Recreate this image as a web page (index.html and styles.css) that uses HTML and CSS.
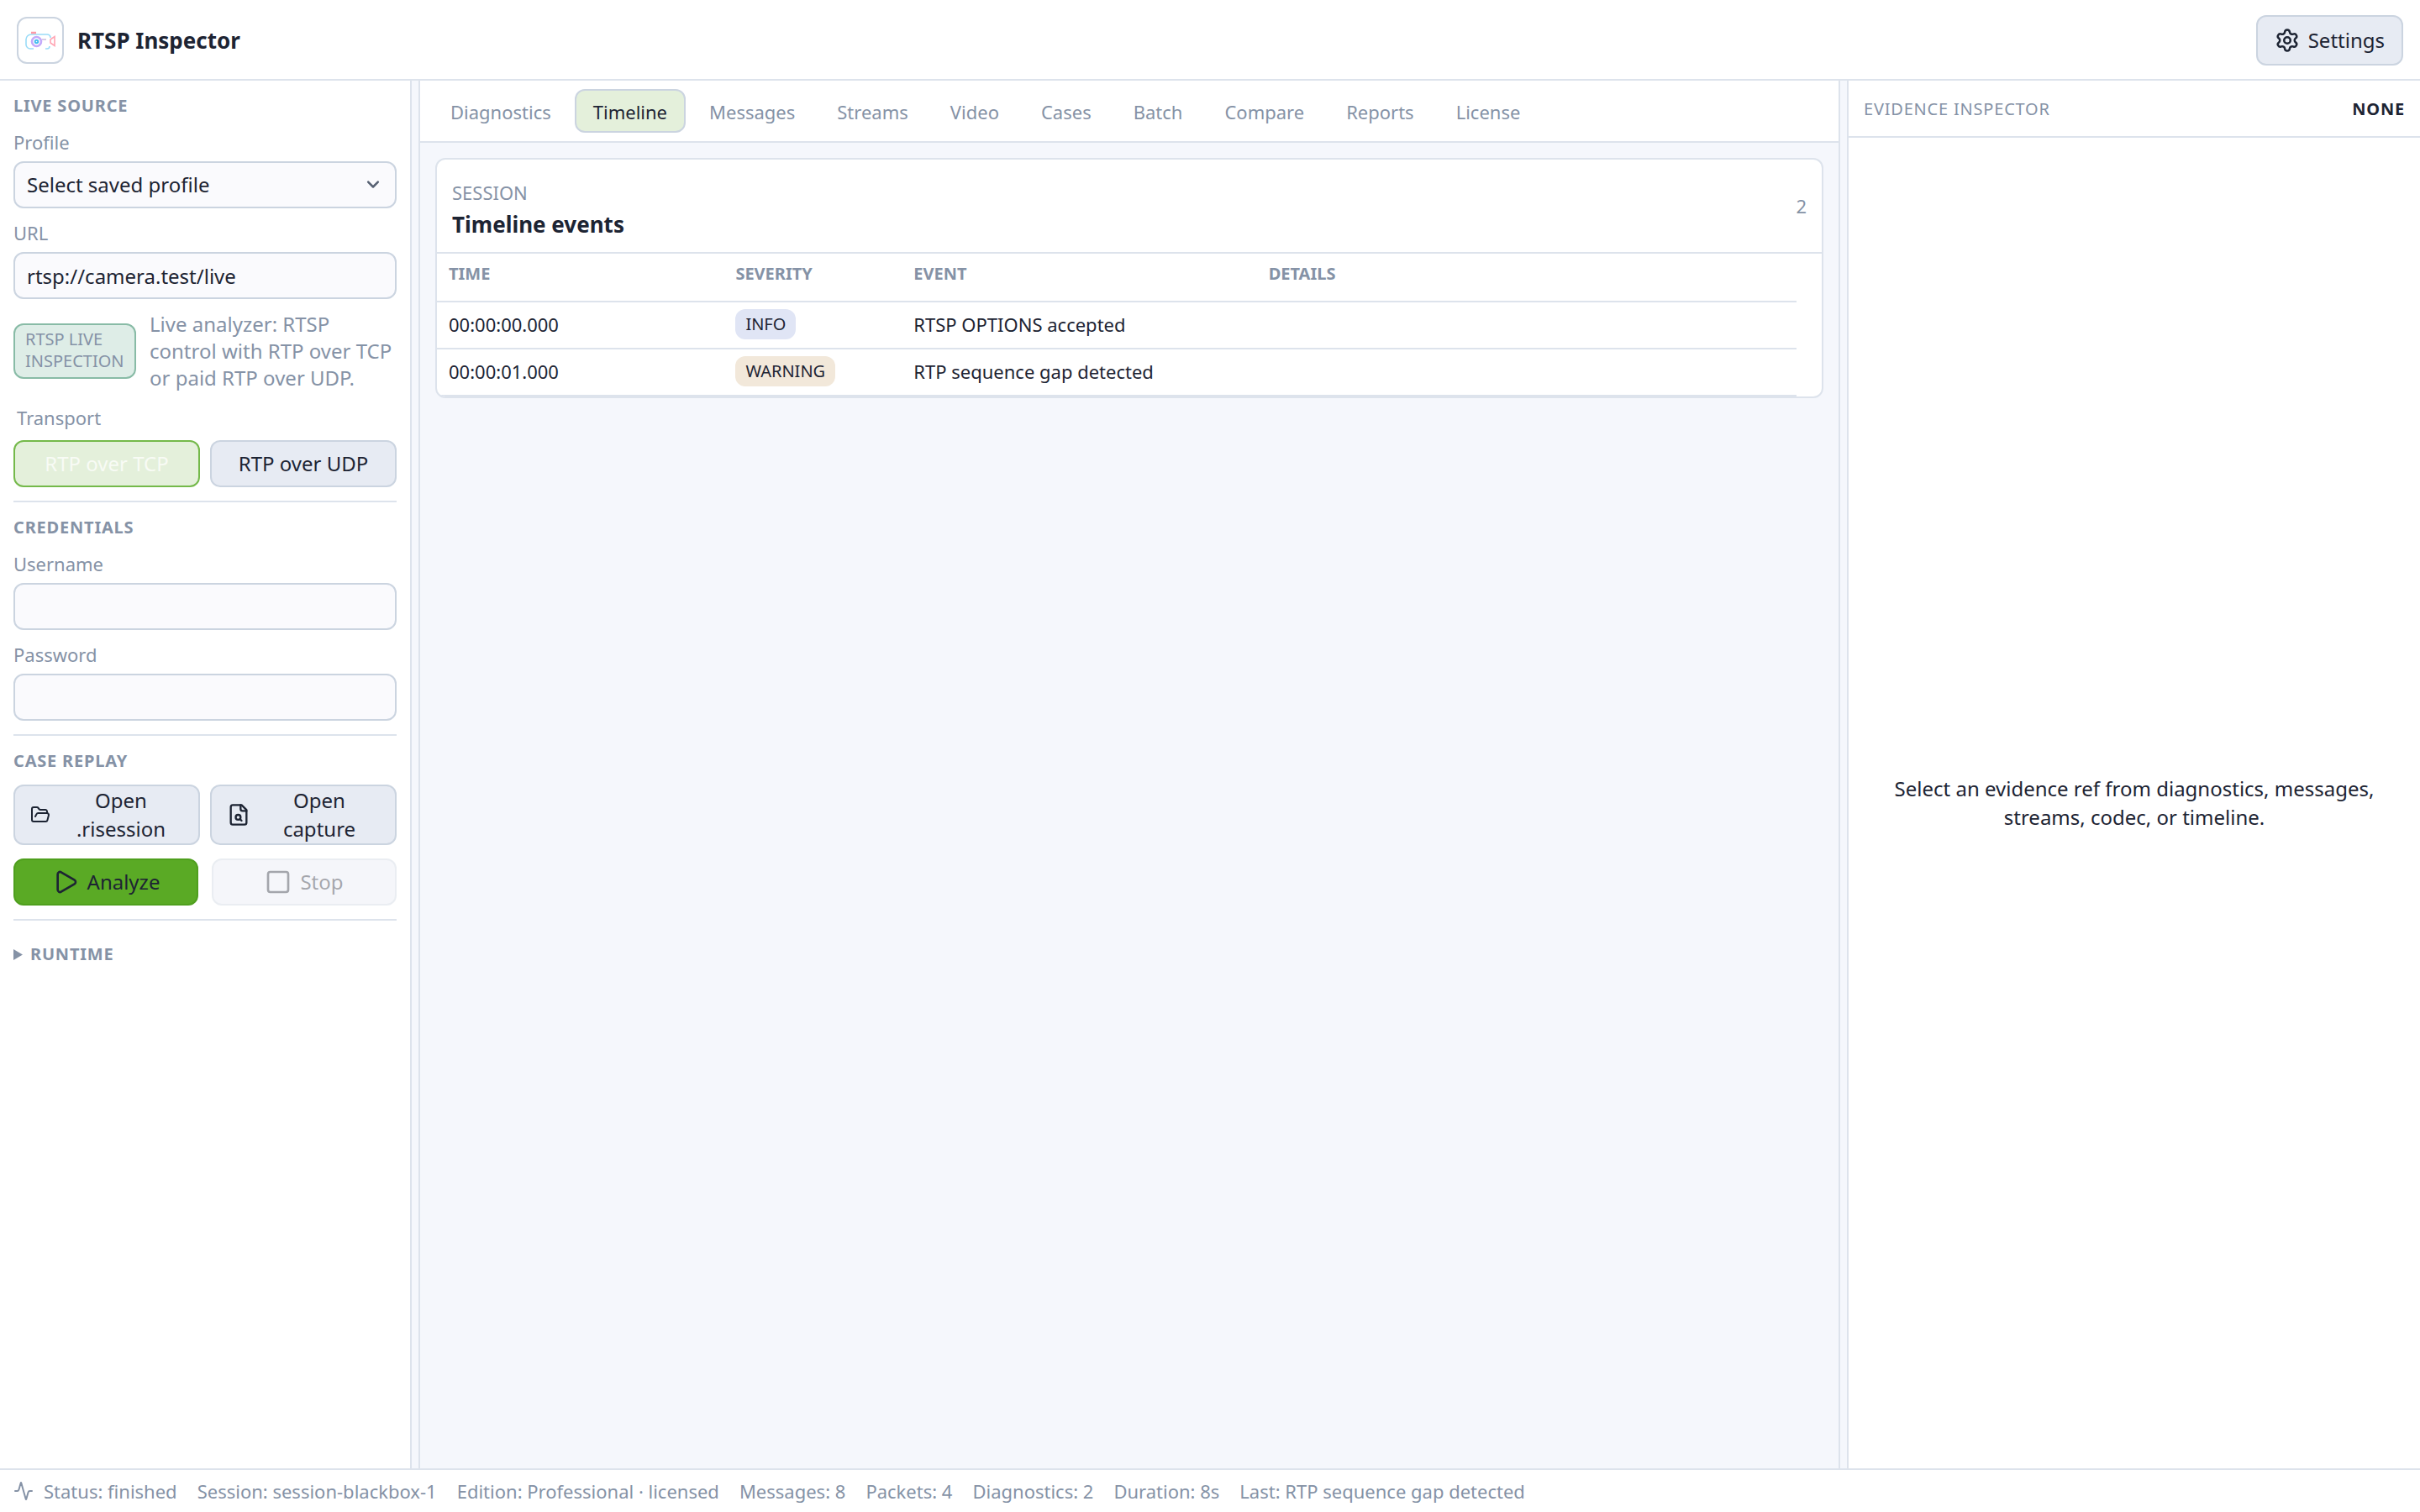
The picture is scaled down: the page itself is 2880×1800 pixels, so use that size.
FILE: index.html
```html
<!DOCTYPE html>
<html lang="en">
<head>
<meta charset="utf-8">
<title>RTSP Inspector</title>
<link rel="stylesheet" href="styles.css">
</head>
<body>
<div class="app">
  <header class="topbar">
    <div class="brand">
      <span class="logo">
        <svg viewBox="0 0 40 40" width="40" height="40" fill="none" stroke-width="1.600">
          <path d="M32 17v-1a4 4 0 0 0-4-3H9a6 6 0 0 0-6 6v6a5 5 0 0 0 5 5h4M26 30h2a3 3 0 0 0 3-3" stroke="#9bdcf8"/>
          <path d="M9 11h6" stroke="#ff9aa6" stroke-width="2.500"/>
          <circle cx="15.500" cy="21.500" r="5.500" stroke="#c3aafa" stroke-width="2.600"/>
          <circle cx="15.500" cy="21.500" r="1.800" stroke="#45bdf0" stroke-width="2"/>
          <path d="M22 19h5" stroke="#cdbfe0"/>
          <path d="M37 15.500v11l-5-3.500v-4z" stroke="#ffa6b4"/>
        </svg>
      </span>
      <h1 class="brand-name">RTSP Inspector</h1>
    </div>
    <button class="btn btn-settings" type="button">
      <svg class="icon icon-md" viewBox="0 0 24 24"><path d="M9.671 4.136a2.34 2.34 0 0 1 4.659 0 2.34 2.34 0 0 0 3.319 1.915 2.34 2.34 0 0 1 2.33 4.033 2.34 2.34 0 0 0 0 3.831 2.34 2.34 0 0 1-2.33 4.033 2.34 2.34 0 0 0-3.319 1.915 2.34 2.34 0 0 1-4.659 0 2.34 2.34 0 0 0-3.32-1.915 2.34 2.34 0 0 1-2.33-4.033 2.34 2.34 0 0 0 0-3.831A2.34 2.34 0 0 1 6.35 6.051a2.34 2.34 0 0 0 3.319-1.915"/><circle cx="12" cy="12" r="3"/></svg>
      Settings
    </button>
  </header>

  <div class="workspace">
    <aside class="sidebar">
      <section class="group">
        <h2 class="group-title">Live source</h2>
        <div class="field">
          <label class="label" for="profile">Profile</label>
          <div class="select-wrap">
            <select class="control" id="profile"><option>Select saved profile</option></select>
            <svg class="icon chevron" viewBox="0 0 24 24"><path d="m5 8 7 7 7-7"/></svg>
          </div>
        </div>
        <div class="field">
          <label class="label" for="url">URL</label>
          <input class="control" id="url" type="text" value="rtsp://camera.test/live">
        </div>
        <div class="notice">
          <span class="mode-badge">RTSP LIVE INSPECTION</span>
          <p class="notice-text">Live analyzer: RTSP control with RTP over TCP or paid RTP over UDP.</p>
        </div>
        <div class="transport" role="group" aria-labelledby="transport-label">
          <span class="label transport-label" id="transport-label">Transport</span>
          <div class="pair">
            <button class="btn btn-selected" type="button" aria-pressed="true">RTP over TCP</button>
            <button class="btn" type="button" aria-pressed="false">RTP over UDP</button>
          </div>
        </div>
      </section>

      <section class="group">
        <h2 class="group-title">Credentials</h2>
        <div class="field">
          <label class="label" for="username">Username</label>
          <input class="control" id="username" type="text">
        </div>
        <div class="field">
          <label class="label" for="password">Password</label>
          <input class="control" id="password" type="password">
        </div>
      </section>

      <section class="group">
        <h2 class="group-title">Case replay</h2>
        <div class="pair replay">
          <button class="btn btn-open" type="button">
            <svg class="icon icon-sm" viewBox="0 0 24 24"><path d="m6 14 1.5-2.9A2 2 0 0 1 9.24 10H20a2 2 0 0 1 1.94 2.5l-1.54 6a2 2 0 0 1-1.95 1.5H4a2 2 0 0 1-2-2V5a2 2 0 0 1 2-2h3.9a2 2 0 0 1 1.69.9l.81 1.2a2 2 0 0 0 1.67.9H18a2 2 0 0 1 2 2v2"/></svg>
            <span class="btn-text">Open .risession</span>
          </button>
          <button class="btn btn-open" type="button">
            <svg class="icon icon-file" viewBox="0 0 24 24"><path d="M15 2H6a2 2 0 0 0-2 2v16a2 2 0 0 0 2 2h12a2 2 0 0 0 2-2V7Z"/><path d="M14 2v4a2 2 0 0 0 2 2h4"/><circle cx="11.500" cy="14.500" r="2.500"/><path d="M13.300 16.300 15 18"/></svg>
            <span class="btn-text">Open capture</span>
          </button>
        </div>
        <div class="pair run">
          <button class="btn btn-primary" type="button">
            <svg class="icon icon-lg" viewBox="0 0 24 24"><path d="M5 5a2 2 0 0 1 3.008-1.728l11.997 6.998a2 2 0 0 1 .003 3.458l-12 7A2 2 0 0 1 5 19z"/></svg>
            Analyze
          </button>
          <button class="btn" type="button" disabled>
            <svg class="icon icon-lg" viewBox="0 0 24 24"><rect x="3" y="3" width="18" height="18" rx="2"/></svg>
            Stop
          </button>
        </div>
      </section>

      <details class="runtime">
        <summary class="group-title runtime-title"><svg class="marker" viewBox="0 0 12 14" width="12" height="14"><path d="M0 1 11 7.500 0 14z" fill="currentColor"/></svg>Runtime</summary>
      </details>
    </aside>

    <div class="resizer" role="separator"></div>

    <main class="main">
      <nav class="tabs">
        <button class="tab" type="button">Diagnostics</button>
        <button class="tab tab-active" type="button">Timeline</button>
        <button class="tab" type="button">Messages</button>
        <button class="tab" type="button">Streams</button>
        <button class="tab" type="button">Video</button>
        <button class="tab" type="button">Cases</button>
        <button class="tab" type="button">Batch</button>
        <button class="tab" type="button">Compare</button>
        <button class="tab" type="button">Reports</button>
        <button class="tab" type="button">License</button>
      </nav>
      <div class="content">
        <section class="card">
          <header class="card-head">
            <div class="card-heading">
              <p class="eyebrow">SESSION</p>
              <h2 class="card-title">Timeline events</h2>
            </div>
            <span class="count">2</span>
          </header>
          <div class="table-wrap">
            <table class="events">
              <colgroup><col class="col-time"><col class="col-severity"><col class="col-event"><col></colgroup>
              <thead>
                <tr><th>TIME</th><th>SEVERITY</th><th>EVENT</th><th>DETAILS</th></tr>
              </thead>
              <tbody>
                <tr><td>00:00:00.000</td><td><span class="pill pill-info">INFO</span></td><td>RTSP OPTIONS accepted</td><td></td></tr>
                <tr><td>00:00:01.000</td><td><span class="pill pill-warning">WARNING</span></td><td>RTP sequence gap detected</td><td></td></tr>
              </tbody>
            </table>
          </div>
        </section>
      </div>
    </main>

    <div class="resizer" role="separator"></div>

    <aside class="inspector">
      <header class="inspector-head">
        <span>EVIDENCE INSPECTOR</span>
        <strong class="inspector-state">NONE</strong>
      </header>
      <p class="inspector-empty">Select an evidence ref from diagnostics, messages, streams, codec, or timeline.</p>
    </aside>
  </div>

  <footer class="statusbar">
    <span class="status"><svg class="icon icon-sm" viewBox="0 0 24 24"><path d="M22 12h-2.480a2 2 0 0 0-1.930 1.460l-2.350 8.360a.25.25 0 0 1-.48 0L9.240 2.180a.25.25 0 0 0-.48 0l-2.350 8.360A2 2 0 0 1 4.490 12H2"/></svg>Status: finished</span>
    <span>Session: session-blackbox-1</span>
    <span>Edition: Professional · licensed</span>
    <span>Messages: 8</span>
    <span>Packets: 4</span>
    <span>Diagnostics: 2</span>
    <span>Duration: 8s</span>
    <span>Last: RTP sequence gap detected</span>
  </footer>
</div>
</body>
</html>
```
FILE: styles.css
```css
:root {
  --text: #1d2433;
  --muted: #8592a6;
  --line: #dde3ec;
  --line-strong: #cbd4e0;
  --surface: #ffffff;
  --canvas: #f5f7fc;
  --control: #fafafd;
  --button: #e7ebf3;
  --green: #5aaa25;
  --green-soft: #e4f0db;
}

* { box-sizing: border-box; }

body {
  margin: 0;
  font-family: "Noto Sans", sans-serif;
  font-size: 24px;
  line-height: 34px;
  color: var(--text);
  background: var(--canvas);
}

h1, h2, p { margin: 0; }

button, input, select { font: inherit; color: inherit; }

.app {
  display: flex;
  flex-direction: column;
  min-height: 100vh;
}

.icon {
  flex: none;
  fill: none;
  stroke: currentColor;
  stroke-width: 2;
  stroke-linecap: round;
  stroke-linejoin: round;
}
.icon-sm { width: 24px; height: 24px; }
.icon-file { width: 28px; height: 28px; }
.icon-md { width: 30px; height: 30px; }
.icon-lg { width: 32px; height: 32px; }

/* Top bar */
.topbar {
  display: flex;
  align-items: center;
  justify-content: space-between;
  padding: 18px 20px 16px;
  background: var(--surface);
  border-bottom: 2px solid var(--line);
}
.brand { display: flex; align-items: center; gap: 16px; }
.logo {
  display: grid;
  place-items: center;
  width: 56px;
  height: 56px;
  border: 2px solid var(--line-strong);
  border-radius: 12px;
}
.brand-name { font-size: 26px; font-weight: 700; }

/* Buttons */
.btn {
  display: flex;
  align-items: center;
  justify-content: center;
  gap: 10px;
  min-height: 56px;
  padding: 0 18px;
  background: var(--button);
  border: 2px solid var(--line-strong);
  border-radius: 12px;
}
.btn-settings { min-height: 60px; padding: 0 20px; }
.btn-selected {
  color: #f8fbf5;
  background: var(--green-soft);
  border-color: #74b94a;
}
.btn-primary { background: var(--green); border-color: #4f9f1e; }
.btn:disabled { opacity: 0.4; }

/* Workspace */
.workspace {
  flex: 1;
  display: grid;
  grid-template-columns: 488px 12px minmax(0, 1fr) 12px 680px;
}
.resizer {
  background: var(--canvas);
  border: solid var(--line);
  border-width: 0 2px;
}

/* Sidebar */
.sidebar { padding: 0 16px; background: var(--surface); }
.group {
  padding: 16px 0;
  border-bottom: 2px solid var(--line);
}
.group-title {
  font-size: 20px;
  line-height: 28px;
  font-weight: 700;
  letter-spacing: 0.04em;
  text-transform: uppercase;
  color: var(--muted);
}
.field { padding-top: 14px; }
.label {
  display: block;
  margin-bottom: 8px;
  font-size: 22px;
  line-height: 30px;
  color: var(--muted);
}
.control {
  display: block;
  width: 100%;
  height: 56px;
  padding: 0 14px;
  background: var(--control);
  border: 2px solid var(--line-strong);
  border-radius: 12px;
  appearance: none;
}
.select-wrap { display: grid; align-items: center; }
.select-wrap > * { grid-area: 1 / 1; }
.chevron {
  justify-self: end;
  width: 20px;
  height: 20px;
  margin-right: 18px;
  color: #566072;
  stroke-width: 3;
  pointer-events: none;
}
.notice {
  display: grid;
  grid-template-columns: 146px 1fr;
  align-items: center;
  gap: 16px;
  padding-top: 14px;
}
.mode-badge {
  padding: 4px 12px 6px;
  font-size: 20px;
  line-height: 26px;
  color: var(--muted);
  background: #deede7;
  border: 2px solid #88bba6;
  border-radius: 12px;
}
.notice-text { line-height: 32px; color: var(--muted); }
.transport { padding-top: 16px; }
.transport-label { margin-bottom: 12px; padding-left: 4px; }
.pair {
  display: grid;
  grid-template-columns: 1fr 1fr;
  gap: 12px;
}
.replay { padding-top: 14px; }
.run { gap: 16px; padding-top: 16px; }
.btn-open { min-height: 72px; }
.btn-text { flex: 1; }
.runtime { padding-top: 26px; }
.runtime-title {
  display: flex;
  align-items: center;
  gap: 8px;
  list-style: none;
}

/* Main column */
.main { display: flex; flex-direction: column; }
.tabs {
  display: flex;
  gap: 6px;
  padding: 10px 14px;
  background: var(--surface);
  border-bottom: 2px solid var(--line);
}
.tab {
  height: 52px;
  padding: 2px 20px 0;
  font-size: 22px;
  color: var(--muted);
  background: none;
  border: 2px solid transparent;
  border-radius: 12px;
}
.tab-active {
  color: var(--text);
  background: var(--green-soft);
  border-color: var(--line-strong);
}
.content { padding: 18px; }
.card {
  overflow: hidden;
  background: var(--surface);
  border: 2px solid var(--line);
  border-radius: 12px;
}
.card-head {
  display: flex;
  align-items: center;
  justify-content: space-between;
  padding: 16px 18px;
  border-bottom: 2px solid var(--line);
}
.card-heading {
  display: grid;
  gap: 6px;
  padding-top: 8px;
}
.eyebrow, .count { font-size: 22px; line-height: 30px; color: var(--muted); }
.card-title { font-size: 26px; line-height: 34px; font-weight: 700; }
.table-wrap { padding-right: 30px; }
.events {
  width: 100%;
  table-layout: fixed;
  border-collapse: separate;
  border-spacing: 0;
  font-size: 22px;
  line-height: 30px;
}
.col-time { width: 21.1%; }
.col-severity { width: 13.1%; }
.col-event { width: 26.1%; }
.events th, .events td {
  height: 56px;
  padding: 0 14px 3px;
  text-align: left;
  border-bottom: 2px solid var(--line);
}
.events th {
  height: 58px;
  padding-bottom: 8px;
  font-size: 20px;
  font-weight: 700;
  color: var(--muted);
}
.pill {
  display: inline-block;
  padding: 3px 12px;
  font-size: 20px;
  border-radius: 12px;
}
.pill-info { background: #e0e5f5; }
.pill-warning { background: #f2e8da; }

/* Evidence inspector */
.inspector {
  display: flex;
  flex-direction: column;
  background: var(--surface);
}
.inspector-head {
  display: flex;
  align-items: center;
  justify-content: space-between;
  padding: 18px 18px 16px;
  font-size: 20px;
  line-height: 32px;
  letter-spacing: 0.04em;
  color: var(--muted);
  border-bottom: 2px solid var(--line);
}
.inspector-state { font-weight: 700; color: var(--text); }
.inspector-empty {
  margin: auto;
  padding: 0 48px;
  text-align: center;
}

/* Status bar */
.statusbar {
  display: flex;
  align-items: center;
  gap: 24px;
  min-height: 52px;
  padding: 0 16px;
  font-size: 22px;
  color: var(--muted);
  background: var(--surface);
  border-top: 2px solid var(--line);
}
.status { display: flex; align-items: center; gap: 12px; }
```
